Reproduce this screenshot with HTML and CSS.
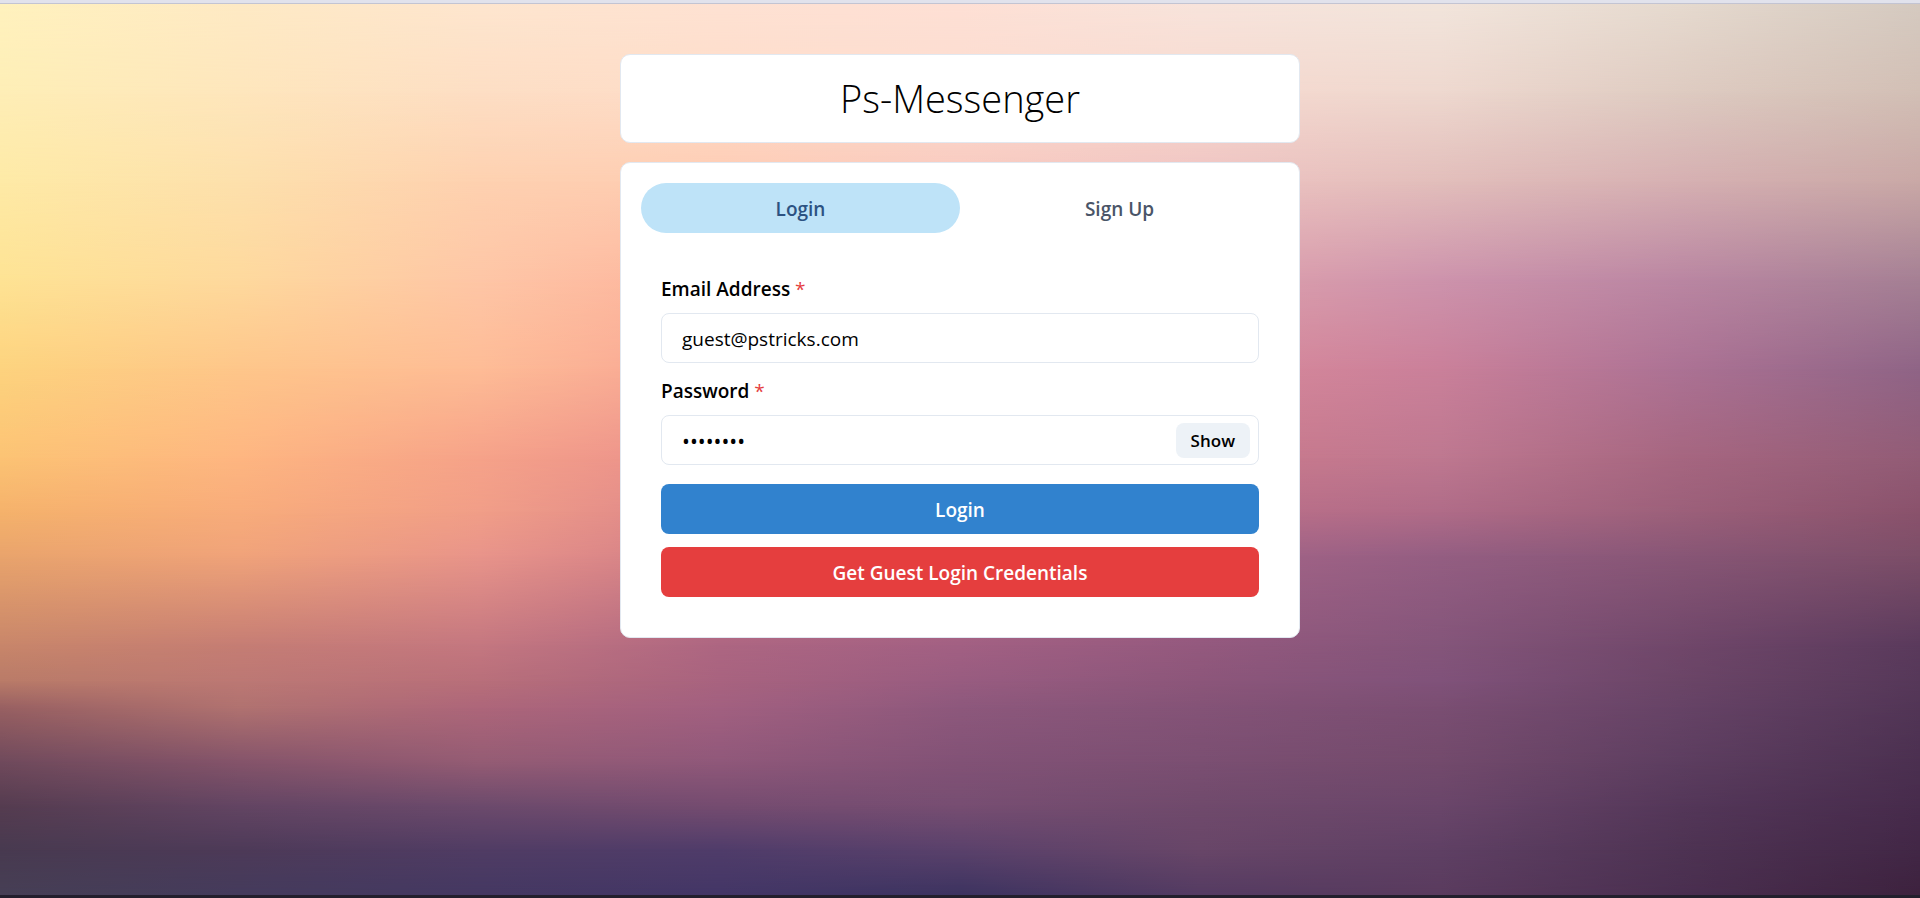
FILE: index.html
```html
<!DOCTYPE html>
<html lang="en">
<head>
  <meta charset="utf-8">
  <meta name="viewport" content="width=device-width, initial-scale=1">
  <title>Ps-Messenger</title>
  <link rel="stylesheet" href="styles.css">
</head>
<body>
  <div class="sky" aria-hidden="true">
    <div class="band band-1"></div>
    <div class="band band-2"></div>
    <div class="band band-3"></div>
    <div class="band band-4"></div>
    <div class="band band-5"></div>
    <div class="band band-6"></div>
    <div class="band band-7"></div>
    <div class="band band-8"></div>
    <div class="band band-9"></div>
    <div class="band band-10"></div>
    <div class="band band-11"></div>
    <div class="band band-12"></div>
    <div class="band band-13"></div>
    <div class="band band-14"></div>
    <div class="band band-15"></div>
    <div class="edge"></div>
  </div>
  <main class="page">
    <header class="card title-card">
      <h1 class="title">Ps-Messenger</h1>
    </header>
    <section class="card panel">
      <div class="tabs" role="tablist">
        <button class="tab tab-active" type="button" role="tab" aria-selected="true">Login</button>
        <button class="tab" type="button" role="tab" aria-selected="false">Sign Up</button>
      </div>
      <form class="form">
        <div class="field">
          <label class="label" for="email">Email Address <span class="required">*</span></label>
          <input class="input" id="email" type="email" value="guest@pstricks.com">
        </div>
        <div class="field">
          <label class="label" for="password">Password <span class="required">*</span></label>
          <div class="input-group">
            <input class="input input-password" id="password" type="password" value="12345678">
            <button class="show" type="button">Show</button>
          </div>
        </div>
        <div class="actions">
          <button class="button button-blue" type="button">Login</button>
          <button class="button button-red" type="button">Get Guest Login Credentials</button>
        </div>
      </form>
    </section>
  </main>
</body>
</html>
```
FILE: styles.css
```css
* { box-sizing: border-box; }

body {
  margin: 0;
  min-height: 100vh;
  display: grid;
  font-family: "Open Sans", "Noto Sans", sans-serif;
  font-size: 19px;
  line-height: 30px;
  color: #000;
}

button, input { font: inherit; color: inherit; margin: 0; }
button { border: 0; cursor: pointer; }

/* Sunset backdrop: horizontal gradients that fade into each other downwards */
.sky {
  grid-area: 1 / 1;
  display: grid;
  overflow: hidden;
  border-top: 3px solid #e1e2ec;
  border-bottom: 3px solid #231f2d;
}

.edge {
  grid-area: 1 / 1;
  border-top: 1px solid #c3c4d2;
}

.band {
  grid-area: 1 / 1;
  -webkit-mask-image: linear-gradient(to bottom, transparent var(--from), #000 var(--to));
  mask-image: linear-gradient(to bottom, transparent var(--from), #000 var(--to));
}

.band-1 { -webkit-mask-image: none; mask-image: none; background: linear-gradient(to right, #fff2be, #feeac5, #fee6cf, #fee2d3, #fee0d5, #f8e4dc, #f2e5dc, #e6dacf, #d5cac0); }
.band-2 { --from: 0%; --to: 10%; background: linear-gradient(to right, #feeeb6, #fee6bc, #fddec4, #fedcc9, #fcdcd0, #f7d9cf, #eed8cf, #decbc1, #d2bfb5); }
.band-3 { --from: 10%; --to: 20%; background: linear-gradient(to right, #feeaa6, #fde0ac, #fed1b0, #fecbb3, #f8c8be, #efc3c2, #e2bebb, #d6b0b2, #c9a8a6); }
.band-4 { --from: 20%; --to: 31%; background: linear-gradient(to right, #fee394, #fed99d, #fec6a6, #fdb29c, #f0aea8, #e0a2ac, #cd93ac, #ba86a2, #a58094); }
.band-5 { --from: 31%; --to: 41%; background: linear-gradient(to right, #fdd37e, #fec68a, #febc96, #f7a394, #e6989a, #d98a9b, #ca809a, #ac7294, #8f6486); }
.band-6 { --from: 41%; --to: 51%; background: linear-gradient(to right, #fcc374, #feb681, #f6a289, #e88d8c, #d98391, #cc7a8c, #be7890, #a66680, #925c76); }
.band-7 { --from: 51%; --to: 57%; background: linear-gradient(to right, #f5b26b, #f8ac7b, #f19e88, #db848a, #ca7b8c, #bd7089, #b06c88, #9c607a, #8a526c); }
.band-8 { --from: 57%; --to: 62%; background: linear-gradient(to right, #e9a46c, #f0a37a, #e8948a, #d07c86, #be7084, #a66588, #945e82, #885676, #7c4e68); }
.band-9 { --from: 62%; --to: 72%; background: linear-gradient(to right, #c8866a, #c57d74, #c47780, #ad6682, #a26083, #94597e, #84557a, #70476a, #5a3a5c); }
.band-10 { --from: 72%; --to: 76%; background: linear-gradient(to right, #b97b68, #bc7874, #b86f7a, #a8637f, #985c80, #8c567a, #80527a, #6b4567, #563859); }
.band-11 { --from: 76%; --to: 79%; background: linear-gradient(to right, #986062, #b07270, #ad667a, #a26080, #8d587c, #845377, #7a4e72, #664366, #523556); }
.band-12 { --from: 79%; --to: 85%; background: linear-gradient(to right, #704a5c, #85546a, #955c74, #90587a, #825276, #7b4f72, #734a6c, #5d3e60, #4b3050); }
.band-13 { --from: 85%; --to: 90%; background: linear-gradient(to right, #553c50, #634563, #6c4a6c, #754c70, #774e72, #704a6c, #6a466a, #543759, #472b4c); }
.band-14 { --from: 90%; --to: 95%; background: linear-gradient(to right, #483a50, #4d3a58, #503c64, #4f3c6a, #5a416b, #684668, #5f4064, #4e3353, #422746); }
.band-15 { --from: 95%; --to: 100%; background: linear-gradient(to right, #463f55, #443b5c, #443862, #433666, #3c3360, #543b62, #5a3b5e, #4a2f50, #3d223e); }

.page {
  grid-area: 1 / 1;
  position: relative;
  width: 100%;
  max-width: 680px;
  margin: 0 auto;
  padding: 54px 0 20px;
}

.card {
  background: #fff;
  border: 1px solid #e2e8f0;
  border-radius: 10px;
}

.title-card {
  padding: 14px;
  margin-bottom: 19px;
  text-align: center;
}

.title {
  margin: 0;
  font-size: 38px;
  font-weight: 300;
  line-height: 59px;
}

.panel { padding: 20px; }

.tabs { display: grid; grid-template-columns: 1fr 1fr; }

.tab {
  height: 50px;
  padding: 2px 20px 0;
  border-radius: 25px;
  background: transparent;
  color: #4a5568;
  font-weight: 600;
}

.tab-active { background: #bee3f8; color: #2c5282; }

.form {
  display: flex;
  flex-direction: column;
  gap: 12px;
  padding: 41px 20px 20px;
}

.label {
  display: block;
  margin-bottom: 9px;
  font-weight: 600;
}

.field + .field { padding-top: 1px; }

.required { color: #e53e3e; font-weight: 400; }

.input {
  display: block;
  width: 100%;
  height: 50px;
  padding: 2px 20px 0;
  border: 1px solid #e2e8f0;
  border-radius: 8px;
  background: #fff;
}

.input-group { position: relative; }

.input-password {
  padding-right: 90px;
  font-size: 21px;
}

.show {
  position: absolute;
  top: 8px;
  right: 9px;
  height: 35px;
  padding: 1px 15px 0;
  border-radius: 8px;
  background: #edf2f7;
  font-size: 17px;
  font-weight: 600;
}

.actions {
  display: flex;
  flex-direction: column;
  gap: 13px;
  margin-top: 7px;
}

.button {
  height: 50px;
  padding: 2px 20px 0;
  border-radius: 8px;
  color: #fff;
  font-weight: 600;
}

.button-blue { background: #3182ce; }
.button-red { background: #e53e3e; }
```
